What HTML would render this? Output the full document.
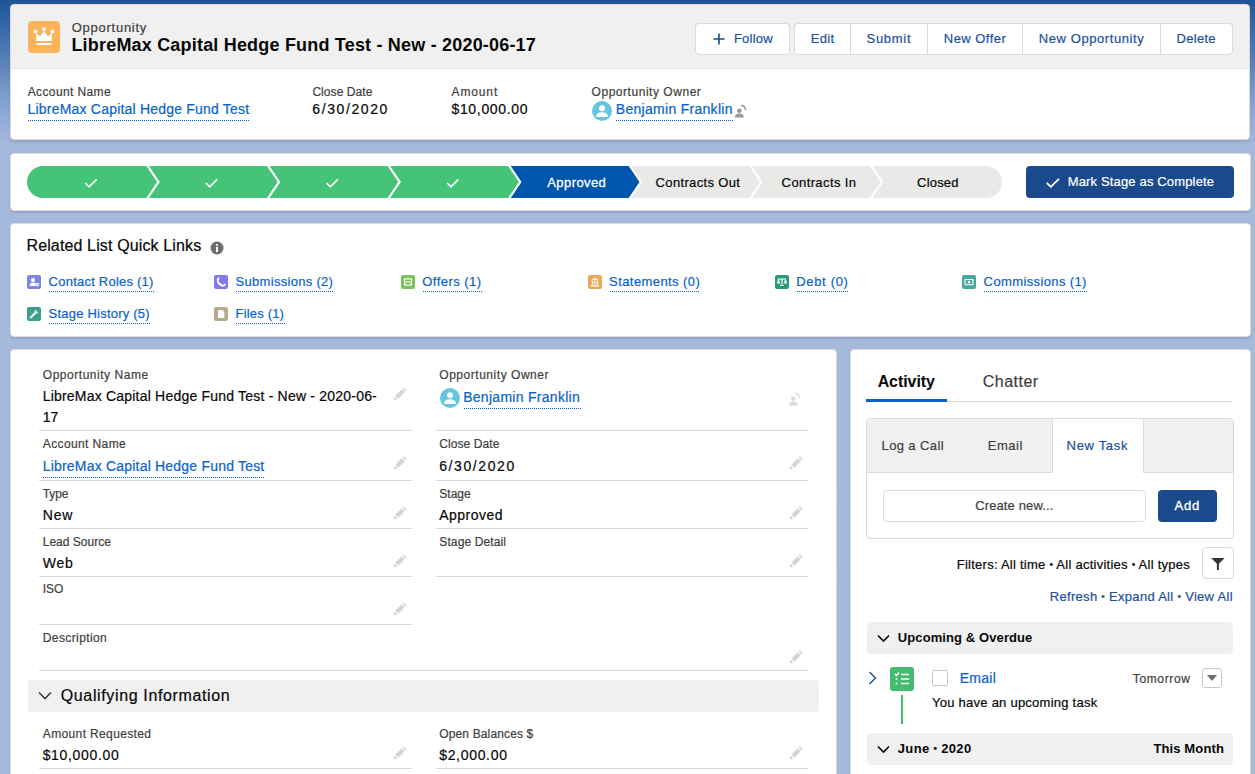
<!DOCTYPE html>
<html><head><meta charset="utf-8"><title>Opportunity</title>
<style>
html,body{margin:0;padding:0;width:1255px;height:774px;overflow:hidden}
body{position:relative;font-family:"Liberation Sans", sans-serif;
background:linear-gradient(to bottom,#1e5596 0px,#3266a6 23px,#4677b4 45px,#5d83b8 65px,#7096c6 85px,#8eaad6 115px,#a5b9dc 145px,#a6badb 774px);}
.t{position:absolute;white-space:pre;-webkit-text-stroke:0.2px currentColor;}
.card{position:absolute;background:#fff;border:1px solid #dddbda;border-radius:4px;box-sizing:border-box;box-shadow:0 2px 2px rgba(0,0,0,.1);overflow:hidden}
.btn{position:absolute;background:#fff;border:1px solid #dddbda;border-radius:4px;box-sizing:border-box}
.dot{position:absolute;height:1px;background-image:linear-gradient(to right,#0862c8 50%,transparent 50%);background-size:2px 1px;}
</style></head><body>
<div class=card style='left:10px;top:4px;width:1240px;height:136px;'><div style='position:absolute;left:0;top:0;right:0;height:63px;background:#f0f0f0;border-bottom:1px solid #e5e5e5;border-radius:4px 4px 0 0'></div></div>
<svg style='position:absolute;left:28px;top:21px' width=32 height=32 viewBox='0 0 32 32'><rect width=32 height=32 rx=4 fill='#fcb35a' />
<g fill='#fff'><circle cx=7.6 cy=10.4 r=1.9 /><circle cx=16 cy=8.2 r=1.9 /><circle cx=24.4 cy=10.4 r=1.9 />
<path d='M7.8 12 L12 15.6 L16 10 L20 15.6 L24.2 12 L23.6 20 L8.4 20Z' /><rect x=8.6 y=22 width=14.8 height=2 /></g></svg>
<div class=t style="left:71.72px;top:19.30px;font-size:13px;line-height:17px;color:#3e3e3c;letter-spacing:0.744px;">Opportunity</div>
<div class=t style="left:71.42px;top:33.56px;font-size:18px;line-height:23px;color:#080707;font-weight:700;-webkit-text-stroke:0;letter-spacing:0.193px;">LibreMax Capital Hedge Fund Test - New - 2020-06-17</div>
<div class=btn style='left:695px;top:23px;width:95px;height:32px'></div>
<svg style='position:absolute;left:713px;top:33px' width=12 height=12 viewBox='0 0 12 12'><path d='M6 0.5V11.5M0.5 6H11.5' stroke='#1b4a8c' stroke-width='1.6' /></svg>
<div class=t style="left:733.92px;top:30.40px;font-size:13px;line-height:17px;color:#1b509b;letter-spacing:0.232px;">Follow</div>
<div class=btn style='left:794px;top:23px;width:439px;height:32px'></div>
<div style='position:absolute;left:850.0px;top:23px;width:1px;height:32px;background:#dddbda'></div>
<div style='position:absolute;left:927.0px;top:23px;width:1px;height:32px;background:#dddbda'></div>
<div style='position:absolute;left:1021.9px;top:23px;width:1px;height:32px;background:#dddbda'></div>
<div style='position:absolute;left:1160.1px;top:23px;width:1px;height:32px;background:#dddbda'></div>
<div class=t style="left:810.72px;top:30.40px;font-size:13px;line-height:17px;color:#1b509b;letter-spacing:0.311px;">Edit</div>
<div class=t style="left:866.52px;top:30.40px;font-size:13px;line-height:17px;color:#1b509b;letter-spacing:0.714px;">Submit</div>
<div class=t style="left:943.82px;top:30.40px;font-size:13px;line-height:17px;color:#1b509b;letter-spacing:0.457px;">New Offer</div>
<div class=t style="left:1038.72px;top:30.40px;font-size:13px;line-height:17px;color:#1b509b;letter-spacing:0.587px;">New Opportunity</div>
<div class=t style="left:1176.62px;top:30.40px;font-size:13px;line-height:17px;color:#1b509b;letter-spacing:0.272px;">Delete</div>
<div class=t style="left:27.68px;top:83.84px;font-size:12px;line-height:16px;color:#3e3e3c;letter-spacing:0.387px;">Account Name</div>
<div class=t style="left:27.56px;top:100.15px;font-size:14px;line-height:18px;color:#0862c8;letter-spacing:0.203px;">LibreMax Capital Hedge Fund Test</div>
<div class=dot style='left:28px;top:119.5px;width:221px'></div>
<div class=t style="left:312.38px;top:83.84px;font-size:12px;line-height:16px;color:#3e3e3c;letter-spacing:0.076px;">Close Date</div>
<div class=t style="left:312.26px;top:100.15px;font-size:14px;line-height:18px;color:#080707;letter-spacing:1.603px;">6/30/2020</div>
<div class=t style="left:451.58px;top:83.84px;font-size:12px;line-height:16px;color:#3e3e3c;letter-spacing:0.860px;">Amount</div>
<div class=t style="left:451.46px;top:100.15px;font-size:14px;line-height:18px;color:#080707;letter-spacing:0.671px;">$10,000.00</div>
<div class=t style="left:591.58px;top:83.84px;font-size:12px;line-height:16px;color:#3e3e3c;letter-spacing:0.534px;">Opportunity Owner</div>
<svg style='position:absolute;left:592px;top:101px' width=20 height=20 viewBox='0 0 20 20'><circle cx=10 cy=10 r=10 fill='#62c6e2' />
<circle cx=10 cy=7.3 r=3 fill='#fff' /><path d='M4 16 Q4 11.2 10 11.2 Q16 11.2 16 16Z' fill='#fff' /></svg>
<div class=t style="left:615.86px;top:100.15px;font-size:14px;line-height:18px;color:#0862c8;letter-spacing:0.285px;">Benjamin Franklin</div>
<div class=dot style='left:616px;top:119.5px;width:117px'></div>
<svg style='position:absolute;left:734px;top:104px' width=14 height=15 viewBox='0 0 14 15'><g fill='#9a9a9a'><circle cx=5.3 cy=6.8 r=2.3 /><path d='M0.8 13.5 Q0.8 9.6 5.3 9.6 Q9.8 9.6 9.8 13.5Z' /></g><path d='M7 1.5 Q11 1.5 11.5 6' stroke='#9a9a9a' stroke-width=1.6 fill=none /></svg>
<div class=card style='left:10px;top:153px;width:1241px;height:58px;'></div>
<svg style='position:absolute;left:0;top:0' width=1255 height=220><path d='M43 166 L146.29999999999998 166 L157.1 182 L146.29999999999998 198 L43 198 A16 16 0 0 1 43 166Z' fill='#45c376' /><path d='M148.9 166 L266.9 166 L277.7 182 L266.9 198 L148.9 198 L159.70000000000002 182Z' fill='#45c376' /><path d='M269.5 166 L387.49999999999994 166 L398.29999999999995 182 L387.49999999999994 198 L269.5 198 L280.3 182Z' fill='#45c376' /><path d='M390.09999999999997 166 L508.09999999999997 166 L518.9 182 L508.09999999999997 198 L390.09999999999997 198 L400.9 182Z' fill='#45c376' /><path d='M510.7 166 L628.7 166 L639.5 182 L628.7 198 L510.7 198 L521.5 182Z' fill='#0056ac' /><path d='M631.3 166 L749.3000000000001 166 L760.1 182 L749.3000000000001 198 L631.3 198 L642.0999999999999 182Z' fill='#e9e9e7' /><path d='M751.9 166 L869.9 166 L880.6999999999999 182 L869.9 198 L751.9 198 L762.6999999999999 182Z' fill='#e9e9e7' /><path d='M872.4999999999999 166 L986 166 A16 16 0 0 1 986 198 L872.4999999999999 198 L883.2999999999998 182Z' fill='#e9e9e7' /><path d='M85.4 183 L89.1 186.8 L96.6 179.4' stroke='#fff' stroke-width='1.6' fill='none' /><path d='M206.0 183 L209.7 186.8 L217.2 179.4' stroke='#fff' stroke-width='1.6' fill='none' /><path d='M326.59999999999997 183 L330.3 186.8 L337.8 179.4' stroke='#fff' stroke-width='1.6' fill='none' /><path d='M447.2 183 L450.90000000000003 186.8 L458.40000000000003 179.4' stroke='#fff' stroke-width='1.6' fill='none' /></svg>
<div class=t style="left:547.22px;top:173.50px;font-size:13px;line-height:17px;color:#fff;letter-spacing:0.426px;-webkit-text-stroke:0.3px #fff;">Approved</div>
<div class=t style="left:655.62px;top:173.50px;font-size:13px;line-height:17px;color:#080707;letter-spacing:0.345px;">Contracts Out</div>
<div class=t style="left:781.62px;top:173.50px;font-size:13px;line-height:17px;color:#080707;letter-spacing:0.395px;">Contracts In</div>
<div class=t style="left:917.12px;top:173.50px;font-size:13px;line-height:17px;color:#080707;letter-spacing:0.174px;">Closed</div>
<div style='position:absolute;left:1026px;top:166px;width:208px;height:32px;border-radius:4px;background:#1b4a8c'></div>
<svg style='position:absolute;left:1046px;top:178px' width=14 height=10 viewBox='0 0 14 10'><path d='M0.8 4.8 L4.8 8.8 L13 0.8' stroke='#fff' stroke-width='1.8' fill='none' /></svg>
<div class=t style="left:1067.72px;top:173.20px;font-size:13px;line-height:17px;color:#fff;letter-spacing:0.155px;">Mark Stage as Complete</div>
<div class=card style='left:10px;top:223px;width:1241px;height:114px;'></div>
<div class=t style="left:26.44px;top:234.66px;font-size:16px;line-height:21px;color:#080707;letter-spacing:0.136px;">Related List Quick Links</div>
<svg style='position:absolute;left:210px;top:241px' width=14 height=14 viewBox='0 0 14 14'><circle cx=7 cy=7 r=6.5 fill='#706e6b' /><rect x=6 y=6 width=2 height=5 fill='#fff' /><circle cx=7 cy=4 r=1.1 fill='#fff' /></svg>
<svg style='position:absolute;left:27px;top:275px' width=14 height=14 viewBox='0 0 14 14'><rect width=14 height=14 rx=2 fill='#7b86e0' /><g fill='#fff'><circle cx=6 cy=5 r=2.1 /><path d='M2.6 11 Q2.6 7.6 6 7.6 Q7.8 7.6 8.6 8.6 L8.6 11Z' /><circle cx=10.3 cy=9.6 r=1.9 /></g><circle cx=10.3 cy=9.6 r=0.7 fill='#7b86e0' /></svg>
<div class=t style="left:48.62px;top:273.00px;font-size:13px;line-height:17px;color:#0862c8;letter-spacing:0.224px;">Contact Roles (1)</div>
<div class=dot style='left:49.4px;top:290.5px;width:104.69999999999999px'></div>
<svg style='position:absolute;left:214px;top:275px' width=14 height=14 viewBox='0 0 14 14'><rect width=14 height=14 rx=2 fill='#8278f0' /><path d='M4.6 3.2 Q3.2 4.2 3.9 6.6 Q5 9.6 8.4 10.6 Q10 11 10.8 9.6' stroke='#fff' stroke-width='1.9' fill='none' stroke-linecap='round' /></svg>
<div class=t style="left:235.52px;top:273.00px;font-size:13px;line-height:17px;color:#0862c8;letter-spacing:0.303px;">Submissions (2)</div>
<div class=dot style='left:236.3px;top:290.5px;width:97.40000000000003px'></div>
<svg style='position:absolute;left:401px;top:275px' width=14 height=14 viewBox='0 0 14 14'><rect width=14 height=14 rx=2 fill='#7ac25d' /><g fill='none' stroke='#fff' stroke-width='1.1'><rect x=3.5 y=4 width=7 height=6 /><path d='M3.5 7 H10.5' /></g></svg>
<div class=t style="left:422.22px;top:273.00px;font-size:13px;line-height:17px;color:#0862c8;letter-spacing:0.474px;">Offers (1)</div>
<div class=dot style='left:423px;top:290.5px;width:58.89999999999998px'></div>
<svg style='position:absolute;left:588px;top:275px' width=14 height=14 viewBox='0 0 14 14'><rect width=14 height=14 rx=2 fill='#e9a85b' /><g fill='#fff'><path d='M7 2.8 L11 5.2 H3Z' /><rect x=3.8 y=6 width=1.3 height=3.6 /><rect x=6.35 y=6 width=1.3 height=3.6 /><rect x=8.9 y=6 width=1.3 height=3.6 /><rect x=3 y=10.2 width=8 height=1.3 /></g></svg>
<div class=t style="left:609.12px;top:273.00px;font-size:13px;line-height:17px;color:#0862c8;letter-spacing:0.413px;">Statements (0)</div>
<div class=dot style='left:609.9px;top:290.5px;width:90.60000000000002px'></div>
<svg style='position:absolute;left:775px;top:275px' width=14 height=14 viewBox='0 0 14 14'><rect width=14 height=14 rx=2 fill='#2a9b7a' /><g fill='none' stroke='#fff' stroke-width='1.2'><path d='M3.5 4 H10.5 M7 4 V10.5 M5 10.5 H9' /><path d='M3.5 5 L2.6 8 H4.4Z M10.5 5 L9.6 8 H11.4Z' /></g></svg>
<div class=t style="left:796.22px;top:273.00px;font-size:13px;line-height:17px;color:#0862c8;letter-spacing:0.682px;">Debt (0)</div>
<div class=dot style='left:797px;top:290.5px;width:51.700000000000045px'></div>
<svg style='position:absolute;left:962px;top:275px' width=14 height=14 viewBox='0 0 14 14'><rect width=14 height=14 rx=2 fill='#47a79b' /><g fill='none' stroke='#fff' stroke-width='1.1'><rect x=3 y=4.5 width=8 height=5.2 rx=0.5 /></g><circle cx=7 cy=7.1 r=1.3 fill='#fff' /></svg>
<div class=t style="left:983.62px;top:273.00px;font-size:13px;line-height:17px;color:#0862c8;letter-spacing:0.380px;">Commissions (1)</div>
<div class=dot style='left:984.4px;top:290.5px;width:102.80000000000007px'></div>
<svg style='position:absolute;left:27px;top:307px' width=14 height=14 viewBox='0 0 14 14'><rect width=14 height=14 rx=2 fill='#3ba08a' /><path d='M3.6 10.6 L8.2 6' stroke='#fff' stroke-width='1.9' stroke-linecap='round' /><path d='M7.4 4.6 Q8 2.8 10.2 3 L9 4.4 L9.8 5.3 L11.1 4.2 Q11.2 6.4 9.3 6.9Z' fill='#fff' /></svg>
<div class=t style="left:48.62px;top:305.00px;font-size:13px;line-height:17px;color:#0862c8;letter-spacing:0.218px;">Stage History (5)</div>
<div class=dot style='left:49.4px;top:322.5px;width:101.0px'></div>
<svg style='position:absolute;left:214px;top:307px' width=14 height=14 viewBox='0 0 14 14'><rect width=14 height=14 rx=2 fill='#b8a98a' /><path d='M4 3 H8.4 L10.3 4.9 V11 H4Z' fill='#fff' /></svg>
<div class=t style="left:235.52px;top:305.00px;font-size:13px;line-height:17px;color:#0862c8;letter-spacing:0.186px;">Files (1)</div>
<div class=dot style='left:236.3px;top:322.5px;width:48.39999999999998px'></div>
<div class=card style='left:10px;top:349px;width:826.5px;height:440px;'></div>
<div class=t style="left:42.78px;top:366.94px;font-size:12px;line-height:16px;color:#3e3e3c;letter-spacing:0.531px;">Opportunity Name</div>
<div class=t style="left:42.66px;top:387.25px;font-size:14px;line-height:18px;color:#080707;letter-spacing:0.206px;">LibreMax Capital Hedge Fund Test - New - 2020-06-</div>
<div class=t style="left:42.66px;top:407.55px;font-size:14px;line-height:18px;color:#080707;">17</div>
<svg style='position:absolute;left:393px;top:387px' width=14 height=14 viewBox='0 0 14 14'><g fill='#d4d4d4'><path d='M0.6 13.4 L1.6 9.6 L4.4 12.4Z' /><path d='M2.3 8.7 L8.7 2.3 L11.7 5.3 L5.3 11.7Z' /><path d='M9.6 1.4 L10.8 0.3 L13.7 3.2 L12.6 4.4Z' /></g></svg>
<div style='position:absolute;left:39px;top:430px;width:373px;height:1px;background:#d8d8d8'></div>
<div class=t style="left:42.78px;top:436.14px;font-size:12px;line-height:16px;color:#3e3e3c;letter-spacing:0.387px;">Account Name</div>
<div class=t style="left:42.66px;top:457.25px;font-size:14px;line-height:18px;color:#0862c8;letter-spacing:0.203px;">LibreMax Capital Hedge Fund Test</div>
<div class=dot style='left:43px;top:476.5px;width:221px'></div>
<svg style='position:absolute;left:393px;top:456px' width=14 height=14 viewBox='0 0 14 14'><g fill='#d4d4d4'><path d='M0.6 13.4 L1.6 9.6 L4.4 12.4Z' /><path d='M2.3 8.7 L8.7 2.3 L11.7 5.3 L5.3 11.7Z' /><path d='M9.6 1.4 L10.8 0.3 L13.7 3.2 L12.6 4.4Z' /></g></svg>
<div style='position:absolute;left:39px;top:480px;width:373px;height:1px;background:#d8d8d8'></div>
<div class=t style="left:42.78px;top:485.84px;font-size:12px;line-height:16px;color:#3e3e3c;letter-spacing:-0.119px;">Type</div>
<div class=t style="left:42.66px;top:506.15px;font-size:14px;line-height:18px;color:#080707;letter-spacing:0.902px;">New</div>
<svg style='position:absolute;left:393px;top:506px' width=14 height=14 viewBox='0 0 14 14'><g fill='#d4d4d4'><path d='M0.6 13.4 L1.6 9.6 L4.4 12.4Z' /><path d='M2.3 8.7 L8.7 2.3 L11.7 5.3 L5.3 11.7Z' /><path d='M9.6 1.4 L10.8 0.3 L13.7 3.2 L12.6 4.4Z' /></g></svg>
<div style='position:absolute;left:39px;top:528px;width:373px;height:1px;background:#d8d8d8'></div>
<div class=t style="left:42.78px;top:533.54px;font-size:12px;line-height:16px;color:#3e3e3c;">Lead Source</div>
<div class=t style="left:42.66px;top:553.95px;font-size:14px;line-height:18px;color:#080707;letter-spacing:0.787px;">Web</div>
<svg style='position:absolute;left:393px;top:554px' width=14 height=14 viewBox='0 0 14 14'><g fill='#d4d4d4'><path d='M0.6 13.4 L1.6 9.6 L4.4 12.4Z' /><path d='M2.3 8.7 L8.7 2.3 L11.7 5.3 L5.3 11.7Z' /><path d='M9.6 1.4 L10.8 0.3 L13.7 3.2 L12.6 4.4Z' /></g></svg>
<div style='position:absolute;left:39px;top:576px;width:373px;height:1px;background:#d8d8d8'></div>
<div class=t style="left:42.78px;top:581.44px;font-size:12px;line-height:16px;color:#3e3e3c;letter-spacing:-0.056px;">ISO</div>
<svg style='position:absolute;left:393px;top:602px' width=14 height=14 viewBox='0 0 14 14'><g fill='#d4d4d4'><path d='M0.6 13.4 L1.6 9.6 L4.4 12.4Z' /><path d='M2.3 8.7 L8.7 2.3 L11.7 5.3 L5.3 11.7Z' /><path d='M9.6 1.4 L10.8 0.3 L13.7 3.2 L12.6 4.4Z' /></g></svg>
<div style='position:absolute;left:39px;top:624px;width:373px;height:1px;background:#d8d8d8'></div>
<div class=t style="left:42.78px;top:629.94px;font-size:12px;line-height:16px;color:#3e3e3c;letter-spacing:0.393px;">Description</div>
<svg style='position:absolute;left:789px;top:650px' width=14 height=14 viewBox='0 0 14 14'><g fill='#d4d4d4'><path d='M0.6 13.4 L1.6 9.6 L4.4 12.4Z' /><path d='M2.3 8.7 L8.7 2.3 L11.7 5.3 L5.3 11.7Z' /><path d='M9.6 1.4 L10.8 0.3 L13.7 3.2 L12.6 4.4Z' /></g></svg>
<div style='position:absolute;left:39px;top:670px;width:769px;height:1px;background:#d8d8d8'></div>
<div class=t style="left:439.28px;top:366.94px;font-size:12px;line-height:16px;color:#3e3e3c;letter-spacing:0.534px;">Opportunity Owner</div>
<svg style='position:absolute;left:440px;top:388px' width=20 height=20 viewBox='0 0 20 20'><circle cx=10 cy=10 r=10 fill='#62c6e2' />
<circle cx=10 cy=7.3 r=3 fill='#fff' /><path d='M4 16 Q4 11.2 10 11.2 Q16 11.2 16 16Z' fill='#fff' /></svg>
<div class=t style="left:463.16px;top:388.15px;font-size:14px;line-height:18px;color:#0862c8;letter-spacing:0.285px;">Benjamin Franklin</div>
<div class=dot style='left:464px;top:408px;width:117px'></div>
<svg style='position:absolute;left:788px;top:392px' width=14 height=15 viewBox='0 0 14 15'><g fill='#dcdcdc'><circle cx=5.3 cy=6.8 r=2.3 /><path d='M0.8 13.5 Q0.8 9.6 5.3 9.6 Q9.8 9.6 9.8 13.5Z' /></g><path d='M7 1.5 Q11 1.5 11.5 6' stroke='#dcdcdc' stroke-width=1.6 fill=none /></svg>
<div style='position:absolute;left:436px;top:430px;width:372px;height:1px;background:#d8d8d8'></div>
<div class=t style="left:439.28px;top:436.14px;font-size:12px;line-height:16px;color:#3e3e3c;letter-spacing:0.076px;">Close Date</div>
<div class=t style="left:439.16px;top:457.25px;font-size:14px;line-height:18px;color:#080707;letter-spacing:1.603px;">6/30/2020</div>
<svg style='position:absolute;left:789px;top:456px' width=14 height=14 viewBox='0 0 14 14'><g fill='#d4d4d4'><path d='M0.6 13.4 L1.6 9.6 L4.4 12.4Z' /><path d='M2.3 8.7 L8.7 2.3 L11.7 5.3 L5.3 11.7Z' /><path d='M9.6 1.4 L10.8 0.3 L13.7 3.2 L12.6 4.4Z' /></g></svg>
<div style='position:absolute;left:436px;top:480px;width:372px;height:1px;background:#d8d8d8'></div>
<div class=t style="left:439.28px;top:485.84px;font-size:12px;line-height:16px;color:#3e3e3c;letter-spacing:0.025px;">Stage</div>
<div class=t style="left:439.16px;top:506.15px;font-size:14px;line-height:18px;color:#080707;letter-spacing:0.497px;">Approved</div>
<svg style='position:absolute;left:789px;top:506px' width=14 height=14 viewBox='0 0 14 14'><g fill='#d4d4d4'><path d='M0.6 13.4 L1.6 9.6 L4.4 12.4Z' /><path d='M2.3 8.7 L8.7 2.3 L11.7 5.3 L5.3 11.7Z' /><path d='M9.6 1.4 L10.8 0.3 L13.7 3.2 L12.6 4.4Z' /></g></svg>
<div style='position:absolute;left:436px;top:528px;width:372px;height:1px;background:#d8d8d8'></div>
<div class=t style="left:439.28px;top:533.54px;font-size:12px;line-height:16px;color:#3e3e3c;letter-spacing:0.126px;">Stage Detail</div>
<svg style='position:absolute;left:789px;top:554px' width=14 height=14 viewBox='0 0 14 14'><g fill='#d4d4d4'><path d='M0.6 13.4 L1.6 9.6 L4.4 12.4Z' /><path d='M2.3 8.7 L8.7 2.3 L11.7 5.3 L5.3 11.7Z' /><path d='M9.6 1.4 L10.8 0.3 L13.7 3.2 L12.6 4.4Z' /></g></svg>
<div style='position:absolute;left:436px;top:576px;width:372px;height:1px;background:#d8d8d8'></div>
<div style='position:absolute;left:28px;top:680px;width:791px;height:32px;border-radius:4px;background:#f0f0f0'></div>
<svg style='position:absolute;left:38px;top:691px' width=14 height=10 viewBox='0 0 14 10'><path d='M1 1.5 L7 7.5 L13 1.5' stroke='#3e3e3c' stroke-width='1.6' fill='none' /></svg>
<div class=t style="left:60.74px;top:685.06px;font-size:16px;line-height:21px;color:#080707;letter-spacing:0.635px;">Qualifying Information</div>
<div class=t style="left:42.78px;top:725.84px;font-size:12px;line-height:16px;color:#3e3e3c;letter-spacing:0.368px;">Amount Requested</div>
<div class=t style="left:42.66px;top:745.95px;font-size:14px;line-height:18px;color:#080707;letter-spacing:0.671px;">$10,000.00</div>
<svg style='position:absolute;left:393px;top:746px' width=14 height=14 viewBox='0 0 14 14'><g fill='#d4d4d4'><path d='M0.6 13.4 L1.6 9.6 L4.4 12.4Z' /><path d='M2.3 8.7 L8.7 2.3 L11.7 5.3 L5.3 11.7Z' /><path d='M9.6 1.4 L10.8 0.3 L13.7 3.2 L12.6 4.4Z' /></g></svg>
<div style='position:absolute;left:39px;top:768px;width:373px;height:1px;background:#d8d8d8'></div>
<div class=t style="left:439.28px;top:725.84px;font-size:12px;line-height:16px;color:#3e3e3c;letter-spacing:0.136px;">Open Balances $</div>
<div class=t style="left:439.16px;top:745.95px;font-size:14px;line-height:18px;color:#080707;letter-spacing:0.690px;">$2,000.00</div>
<svg style='position:absolute;left:789px;top:746px' width=14 height=14 viewBox='0 0 14 14'><g fill='#d4d4d4'><path d='M0.6 13.4 L1.6 9.6 L4.4 12.4Z' /><path d='M2.3 8.7 L8.7 2.3 L11.7 5.3 L5.3 11.7Z' /><path d='M9.6 1.4 L10.8 0.3 L13.7 3.2 L12.6 4.4Z' /></g></svg>
<div style='position:absolute;left:436px;top:768px;width:372px;height:1px;background:#d8d8d8'></div>
<div class=card style='left:849.5px;top:349px;width:401.5px;height:440px;'></div>
<div class=t style="left:877.64px;top:370.86px;font-size:16px;line-height:21px;color:#080707;font-weight:700;-webkit-text-stroke:0;letter-spacing:-0.074px;">Activity</div>
<div class=t style="left:982.84px;top:370.86px;font-size:16px;line-height:21px;color:#3e3e3c;letter-spacing:0.469px;">Chatter</div>
<div style='position:absolute;left:866px;top:401px;width:367px;height:1px;background:#dddbda'></div>
<div style='position:absolute;left:866px;top:399px;width:81px;height:3px;background:#0a60cf'></div>
<div style='position:absolute;left:866px;top:418px;width:367.5px;height:121px;border:1px solid #dddbda;border-radius:4px;box-sizing:border-box;background:#fff;overflow:hidden'><div style='position:absolute;left:0;top:0;width:184.5px;height:53px;background:#f0f0f0;border-bottom:1px solid #dddbda;border-right:1px solid #dddbda'></div><div style='position:absolute;left:275.5px;top:0;width:100px;height:53px;background:#f0f0f0;border-bottom:1px solid #dddbda;border-left:1px solid #dddbda'></div></div>
<div class=t style="left:881.52px;top:436.80px;font-size:13px;line-height:17px;color:#3e3e3c;letter-spacing:0.388px;">Log a Call</div>
<div class=t style="left:987.72px;top:436.80px;font-size:13px;line-height:17px;color:#3e3e3c;letter-spacing:0.556px;">Email</div>
<div class=t style="left:1066.62px;top:436.80px;font-size:13px;line-height:17px;color:#1b509b;letter-spacing:0.674px;">New Task</div>
<div style='position:absolute;left:883px;top:490px;width:263px;height:32px;border:1px solid #dddbda;border-radius:4px;box-sizing:border-box;background:#fff'></div>
<div class=t style="left:975.22px;top:496.70px;font-size:13px;line-height:17px;color:#3e3e3c;letter-spacing:0.119px;">Create new...</div>
<div style='position:absolute;left:1158px;top:490px;width:59px;height:32px;border-radius:4px;background:#1b4a8c'></div>
<div class=t style="left:1174.42px;top:496.70px;font-size:13px;line-height:17px;color:#fff;letter-spacing:0.900px;-webkit-text-stroke:0.35px #fff;">Add</div>
<div class=t style="left:956.72px;top:555.70px;font-size:13px;line-height:17px;color:#080707;letter-spacing:0.254px;">Filters: All time <span style='font-size:10px;position:relative;top:-1px'>•</span> All activities <span style='font-size:10px;position:relative;top:-1px'>•</span> All types</div>
<div style='position:absolute;left:1202px;top:547px;width:32px;height:32px;border:1px solid #dddbda;border-radius:4px;box-sizing:border-box;background:#fff'></div>
<svg style='position:absolute;left:1211px;top:557px' width=14 height=14 viewBox='0 0 14 14'><path d='M0.2 1 H13.6 L6.9 7.8Z' fill='#333' /><rect x=5.9 y=7 width=2 height=6 fill='#333' /></svg>
<div class=t style="left:1049.82px;top:587.80px;font-size:13px;line-height:17px;color:#1b509b;letter-spacing:0.300px;">Refresh <span style='font-size:10px;position:relative;top:-1px'>•</span> Expand All <span style='font-size:10px;position:relative;top:-1px'>•</span> View All</div>
<div style='position:absolute;left:867px;top:622px;width:366px;height:32px;border-radius:4px;background:#f0f0f0'></div>
<svg style='position:absolute;left:877px;top:634px' width=13 height=9 viewBox='0 0 13 9'><path d='M1 1.5 L6.5 7 L12 1.5' stroke='#080707' stroke-width='1.6' fill='none' /></svg>
<div class=t style="left:897.82px;top:628.70px;font-size:13px;line-height:17px;color:#080707;font-weight:700;-webkit-text-stroke:0;letter-spacing:0.095px;">Upcoming &amp; Overdue</div>
<svg style='position:absolute;left:868px;top:671px' width=9 height=14 viewBox='0 0 9 14'><path d='M1.5 1 L7.5 7 L1.5 13' stroke='#1b4a8c' stroke-width='1.4' fill='none' /></svg>
<div style='position:absolute;left:890px;top:667px;width:24px;height:24px;border-radius:3px;background:#45bb6f'></div>
<svg style='position:absolute;left:890px;top:667px' width=24 height=24 viewBox='0 0 24 24'><g stroke='#fff' stroke-width='1.6' fill='none'><path d='M5 7 L6.5 8.5 L9 5.5' /><path d='M11 7.5 H19 M11 12 H19 M11 16.5 H19' /></g><g fill='#fff'><circle cx=6.5 cy=12 r=1 /><circle cx=6.5 cy=16.5 r=1 /></g></svg>
<div style='position:absolute;left:901px;top:695px;width:2px;height:29px;background:#45bb6f'></div>
<div style='position:absolute;left:932px;top:670px;width:16px;height:16px;border:1px solid #c9c7c5;border-radius:2px;box-sizing:border-box;background:#fff'></div>
<div class=t style="left:959.76px;top:668.95px;font-size:14px;line-height:18px;color:#0862c8;letter-spacing:0.276px;">Email</div>
<div class=t style="left:1132.78px;top:670.64px;font-size:12px;line-height:16px;color:#3e3e3c;letter-spacing:0.639px;">Tomorrow</div>
<div style='position:absolute;left:1202px;top:668px;width:20px;height:20px;border:1px solid #c9c7c5;border-radius:3px;box-sizing:border-box;background:#fff'></div>
<svg style='position:absolute;left:1206px;top:674px' width=12 height=8 viewBox='0 0 12 8'><path d='M1 1 H11 L6 7Z' fill='#706e6b' /></svg>
<div class=t style="left:932.12px;top:694.20px;font-size:13px;line-height:17px;color:#080707;letter-spacing:0.241px;">You have an upcoming task</div>
<div style='position:absolute;left:867px;top:733px;width:366px;height:32px;border-radius:4px;background:#f0f0f0'></div>
<svg style='position:absolute;left:877px;top:745px' width=13 height=9 viewBox='0 0 13 9'><path d='M1 1.5 L6.5 7 L12 1.5' stroke='#080707' stroke-width='1.6' fill='none' /></svg>
<div class=t style="left:897.82px;top:739.60px;font-size:13px;line-height:17px;color:#080707;font-weight:700;-webkit-text-stroke:0;letter-spacing:0.331px;">June <span style='font-size:10px;position:relative;top:-1px'>•</span> 2020</div>
<div class=t style="left:1153.42px;top:739.60px;font-size:13px;line-height:17px;color:#080707;font-weight:700;-webkit-text-stroke:0;letter-spacing:0.124px;">This Month</div>
</body></html>
